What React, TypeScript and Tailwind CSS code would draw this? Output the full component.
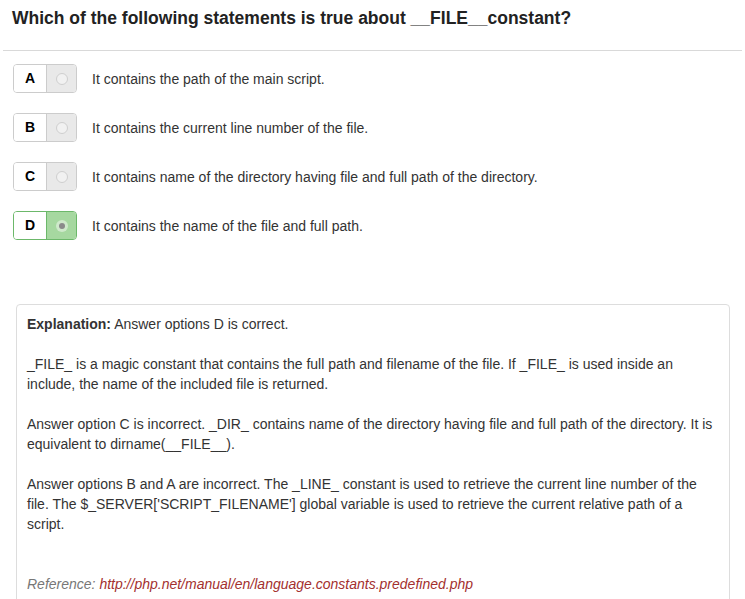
const OPTIONS = [
  { key: "A", text: "It contains the path of the main script." },
  { key: "B", text: "It contains the current line number of the file." },
  { key: "C", text: "It contains name of the directory having file and full path of the directory." },
  { key: "D", text: "It contains the name of the file and full path." },
];

const ANSWER = "D";

function OptionRow({ label, text, checked }: { label: string; text: string; checked: boolean }) {
  return (
    <div className="flex items-center">
      <div
        className={
          checked
            ? "flex h-[29px] w-[64px] overflow-hidden rounded-[4px] border border-[#6cb86a]"
            : "flex h-[29px] w-[64px] overflow-hidden rounded-[4px] border border-[#ccc]"
        }
      >
        <span className="flex w-[32px] items-center justify-center bg-white text-[14px] font-bold text-black">
          {label}
        </span>
        <span
          className={
            checked
              ? "flex flex-1 items-center justify-center border-l border-[#6cb86a] bg-[#a6d8a0]"
              : "flex flex-1 items-center justify-center border-l border-[#ccc] bg-[#e9e9e9]"
          }
        >
          {checked ? (
            <span className="flex h-[12px] w-[12px] items-center justify-center rounded-full bg-[#cfe9cb]">
              <span className="h-[6px] w-[6px] rounded-full bg-[#8a8a8a]" />
            </span>
          ) : (
            <span className="h-[12px] w-[12px] rounded-full border border-[#cfcfcf] bg-[#f1f1f1]" />
          )}
        </span>
      </div>
      <p className="ml-[15px] text-[14px] leading-[20px]">{text}</p>
    </div>
  );
}

export default function App() {
  return (
    <div className="h-[599px] w-[745px] overflow-hidden bg-white font-['Liberation_Sans',Arial,sans-serif] text-[#333]">
      <h1 className="px-[12px] pt-[7px] text-[17.5px] font-bold leading-[22px] text-[#222]">
        Which of the following statements is true about __FILE__constant?
      </h1>
      <hr className="mx-[3px] mt-[21px] border-t border-[#d9d9d9]" />

      <div className="flex flex-col gap-[20px] pl-[13px] pt-[13px]">
        {OPTIONS.map((o) => (
          <OptionRow key={o.key} label={o.key} text={o.text} checked={o.key === ANSWER} />
        ))}
      </div>

      <div className="ml-[16px] mt-[64px] w-[714px] rounded-[4px] border border-[#ddd] px-[10px] pb-[10px] pt-[9px] text-[14px] leading-[20px]">
        <p>
          <b>Explanation:</b> Answer options D is correct.
        </p>
        <p className="mt-[20px]">
          _FILE_ is a magic constant that contains the full path and filename of the file. If _FILE_ is used inside an
          include, the name of the included file is returned.
        </p>
        <p className="mt-[20px]">
          Answer option C is incorrect. _DIR_ contains name of the directory having file and full path of the directory. It is
          equivalent to dirname(__FILE__).
        </p>
        <p className="mt-[20px]">
          Answer options B and A are incorrect. The _LINE_ constant is used to retrieve the current line number of the
          file. The $_SERVER['SCRIPT_FILENAME'] global variable is used to retrieve the current relative path of a
          script.
        </p>
        <p className="mt-[40px] italic text-[#777]">
          Reference: <a className="text-[#a3302e]">http://php.net/manual/en/language.constants.predefined.php</a>
        </p>
      </div>
    </div>
  );
}
